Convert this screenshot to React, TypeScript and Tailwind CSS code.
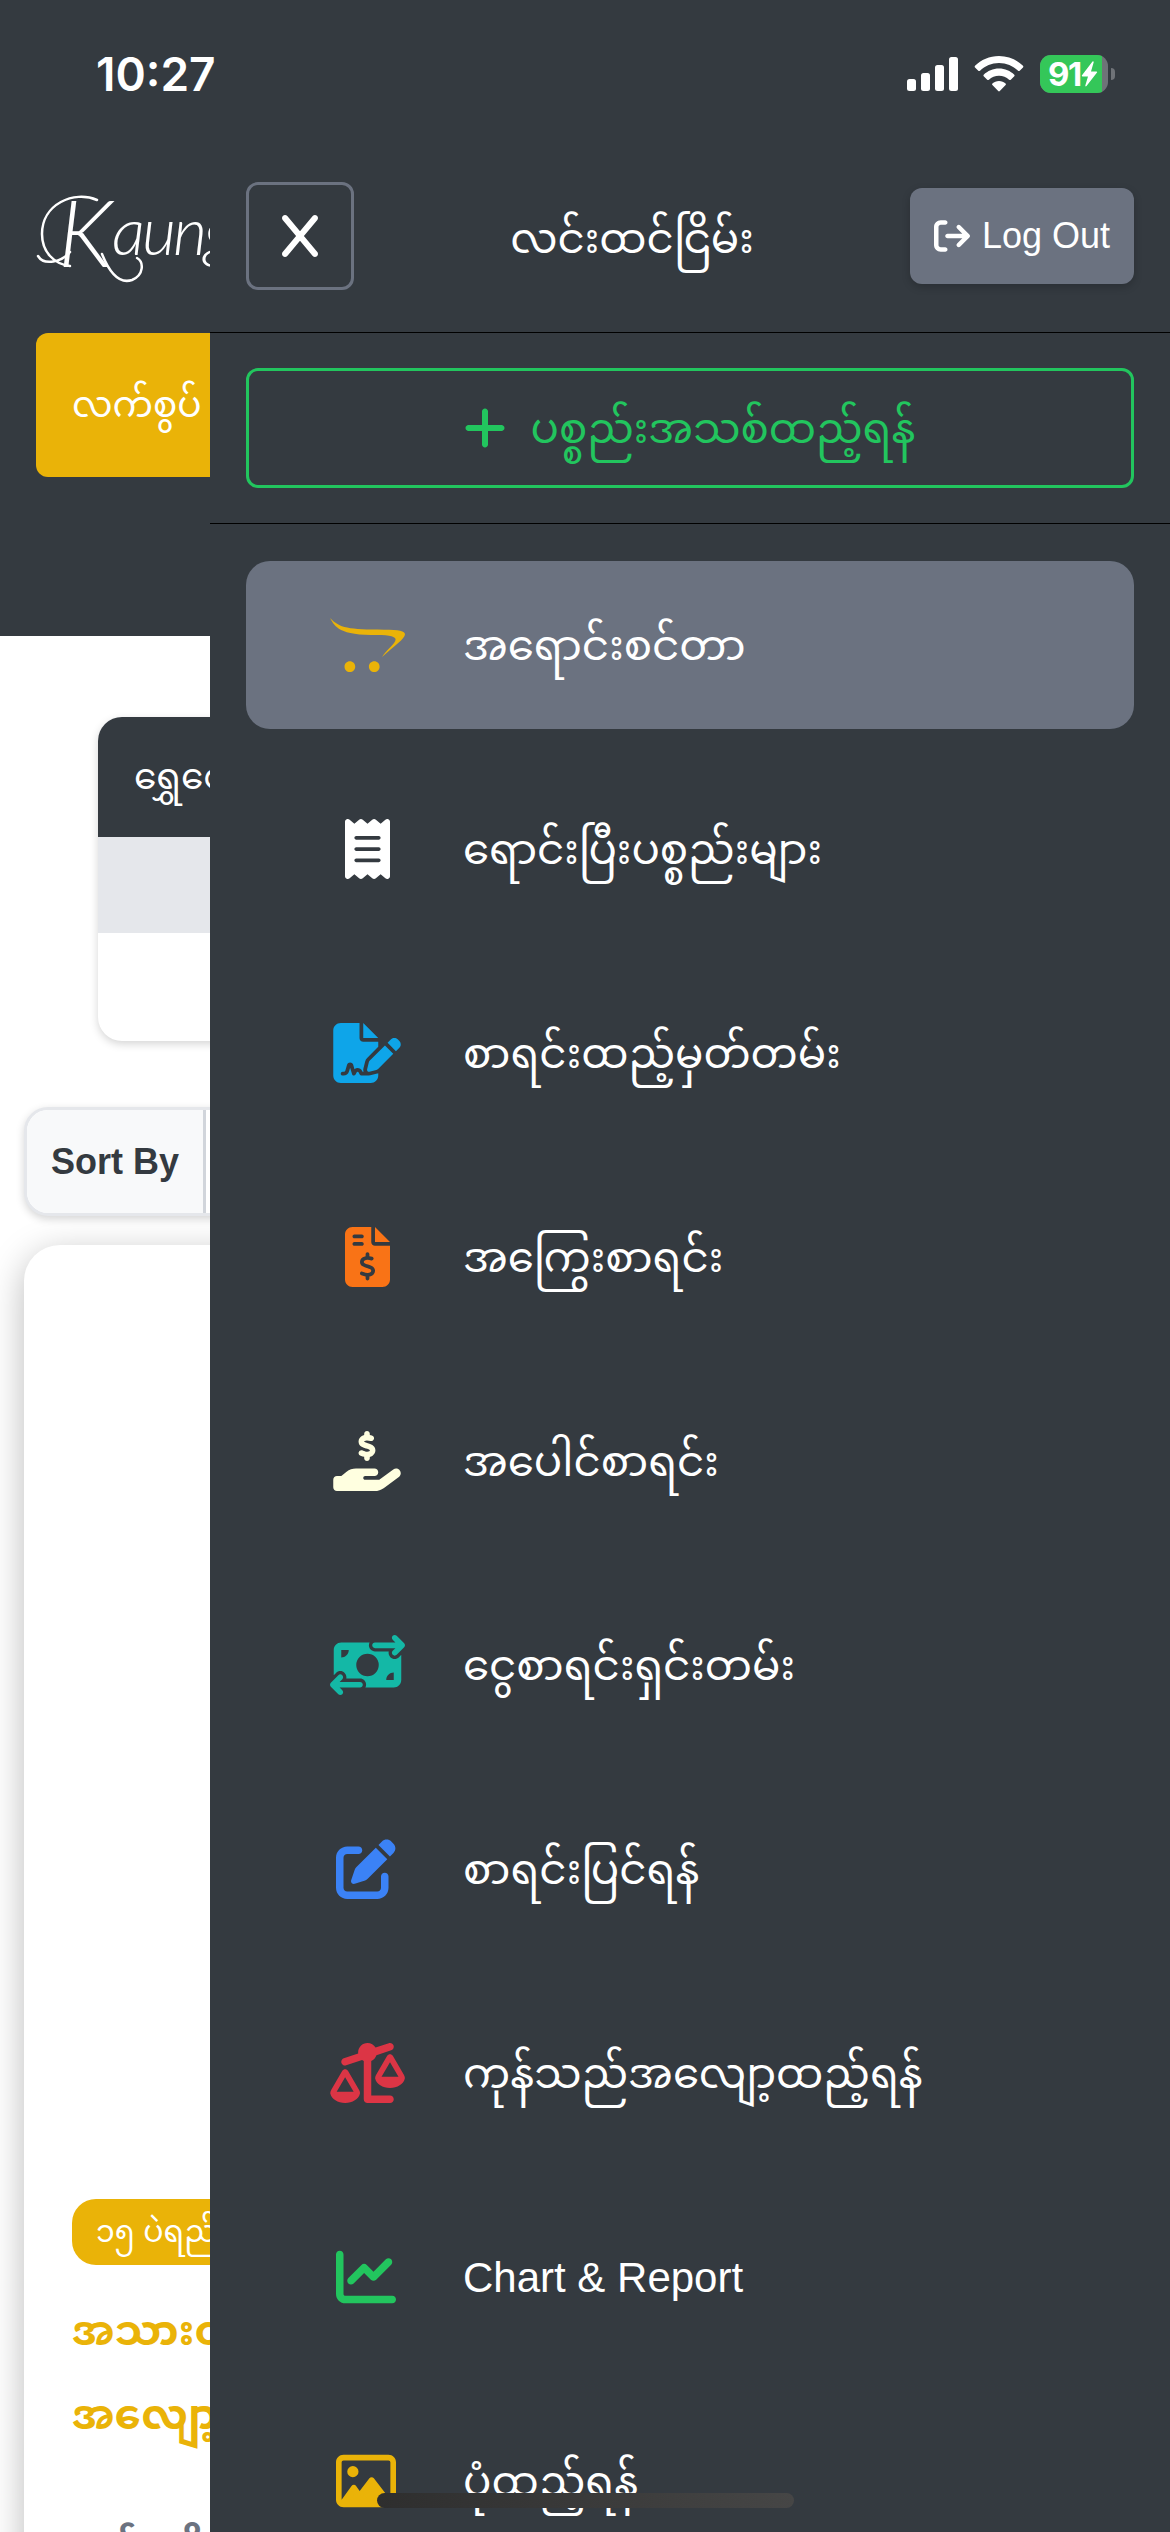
import type { ReactNode } from "react";
import {
  FaArrowRightFromBracket, FaChartLine, FaFileInvoiceDollar, FaFileSignature, FaHandHoldingDollar,
  FaMoneyBillTransfer, FaOpencart, FaPenToSquare, FaPlus, FaReceipt, FaRegImage, FaScaleUnbalanced, FaX,
} from "react-icons/fa6";

type Item = { icon: ReactNode; label: string; active?: boolean };

const items: Item[] = [
  { icon: <FaOpencart className="h-[60px] w-[75px] text-[#eab308]" />, label: "အရောင်းစင်တာ", active: true },
  { icon: <FaReceipt className="h-[60px] w-[45px] text-white" />, label: "ရောင်းပြီးပစ္စည်းများ" },
  { icon: <FaFileSignature className="-ml-px h-[60px] w-[68px] text-[#0ea5e9]" />, label: "စာရင်းထည့်မှတ်တမ်း" },
  { icon: <FaFileInvoiceDollar className="h-[60px] w-[45px] text-[#f97316]" />, label: "အကြွေးစာရင်း" },
  { icon: <FaHandHoldingDollar className="-ml-px h-[60px] w-[68px] text-[#ffffe0]" />, label: "အပေါင်စာရင်း" },
  { icon: <FaMoneyBillTransfer className="h-[60px] w-[75px] text-[#14b8a6]" />, label: "ငွေစာရင်းရှင်းတမ်း" },
  { icon: <FaPenToSquare className="-ml-[3px] h-[60px] w-[60px] text-[#3b82f6]" />, label: "စာရင်းပြင်ရန်" },
  { icon: <FaScaleUnbalanced className="h-[60px] w-[75px] text-[#dc3545]" />, label: "ကုန်သည်အလျော့ထည့်ရန်" },
  { icon: <FaChartLine className="-ml-[3px] h-[60px] w-[60px] text-[#22c55e]" />, label: "Chart & Report" },
  { icon: <FaRegImage className="-ml-[3px] h-[60px] w-[60px] text-[#eab308]" />, label: "ပုံထည့်ရန်" },
];

function StatusBar() {
  return (
    <div className="absolute left-0 top-0 z-20 flex h-[148px] w-full items-center justify-between pl-[96px] pr-[55px] text-white">
      <span className="font-['Inter'] text-[46px] font-semibold leading-none">10:27</span>
      <div className="flex items-center">
        <svg width="52" height="36" viewBox="0 0 52 36" fill="#fff">
          <rect x="0" y="23" width="9" height="12" rx="2.5" />
          <rect x="14" y="17" width="9" height="18" rx="2.5" />
          <rect x="28" y="9" width="9" height="26" rx="2.5" />
          <rect x="42" y="1" width="9" height="34" rx="2.5" />
        </svg>
        <svg className="ml-[15px]" width="50" height="36" viewBox="0 0 50 36" fill="#fff">
          <path d="M25 0C34.500 0 43 3.800 49 9.800Q49.700 10.600 49 11.400L45.700 14.700Q44.900 15.500 44 14.700C39 9.900 32.400 7 25 7S11 9.900 6 14.700Q5.100 15.500 4.300 14.700L1 11.400Q.3 10.600 1 9.800C7 3.800 15.500 0 25 0Z" />
          <path d="M25 12.500C31 12.500 36.400 14.900 40.300 18.700Q41 19.500 40.300 20.300L36.800 23.700Q36 24.500 35.100 23.700C32.400 21.200 28.900 19.700 25 19.700S17.600 21.200 14.900 23.700Q14 24.500 13.200 23.700L9.700 20.300Q9 19.500 9.700 18.700C13.600 14.900 19 12.500 25 12.500Z" />
          <path d="M25 25C27.600 25 29.800 25.900 31.600 27.400Q32.400 28.100 31.600 28.900L25.800 35Q25 35.800 24.200 35L18.400 28.900Q17.600 28.100 18.400 27.400C20.200 25.900 22.400 25 25 25Z" />
        </svg>
        <div className="ml-[16px] flex h-[38px] w-[68px] items-center overflow-hidden rounded-[11px] bg-[#6f7378]">
          <div className="flex h-full w-[62px] items-center bg-[#34c759] pl-[8px]">
            <span className="font-['Inter'] text-[33px] font-bold leading-none tracking-[-1.500px]">91</span>
            <svg width="17" height="26" viewBox="0 0 17 26" fill="#fff">
              <path d="M11.500.5 1 14.200Q.4 15.400 1.600 15.400H7L4.300 24.600Q4.300 26 5.500 25L16 11.600Q16.600 10.400 15.400 10.400H10L12.700 1.300Q12.600-.2 11.500.5Z" />
            </svg>
          </div>
        </div>
        <div className="ml-[3px] h-[12px] w-[4px] rounded-r-full bg-[#6f7378]" />
      </div>
    </div>
  );
}

function Logo() {
  return (
    <div className="relative flex h-[147px] items-start whitespace-nowrap pl-[22px] font-['Lato'] font-light italic leading-none">
      {/* flourishes around the wordmark */}
      <svg className="absolute left-0 top-0" width="120" height="110" viewBox="0 0 120 110" fill="none" stroke="#fff" strokeWidth="2.500" strokeLinecap="round">
        <path d="M61 14C38 4 6 18 6 48C6 66 18 78 34 80" />
        <path d="M2 70C8 80 26 76 34 66" />
        <path d="M66 68C74 88 84 98 96 94C108 89 108 76 101 72" />
      </svg>
      <span className="w-[54px] text-[92px]">K</span>
      <span className="mt-[11px] text-[66px] tracking-[-3px]">aung</span>
    </div>
  );
}

function ShopPage() {
  return (
    <div className="flex h-full w-[210px] shrink-0 flex-col overflow-hidden bg-white">
      <div className="flex h-[636px] shrink-0 flex-col bg-[#343a40] pl-9 pt-[186px] text-white">
        <Logo />
        <div className="flex h-36 w-[300px] shrink-0 items-center rounded-[12px] bg-[#eab308] pl-9 text-[36px]">လက်စွပ်</div>
      </div>
      <div className="ml-[98px] mt-[81px] flex h-[324px] w-[700px] shrink-0 flex-col overflow-hidden rounded-[24px] bg-white shadow-[0_3px_9px_rgba(0,0,0,0.17)]">
        <div className="flex h-[120px] items-center bg-[#343a40] pl-9 text-[36px] text-white">ရွှေစျေး</div>
        <div className="h-24 bg-[#e5e7eb]" />
      </div>
      <div className="ml-6 mt-[66px] flex h-[109px] w-[800px] shrink-0 overflow-hidden rounded-[24px] border-[3px] border-[#e5e7eb] bg-white shadow-[0_3px_9px_rgba(0,0,0,0.17)]">
        <div className="flex w-[179px] items-center border-r-[3px] border-[#d1d5db] bg-[#f8f9fa] pl-[24px] text-[36px] font-bold text-[#343a40]">
          Sort By
        </div>
      </div>
      <div className="ml-6 mt-[29px] flex w-[900px] grow flex-col rounded-t-[36px] bg-white pl-12 shadow-[0_9px_36px_rgba(0,0,0,0.27)]">
        <div className="mt-[954px] flex h-[66px] w-[240px] shrink-0 items-center rounded-[24px] bg-[#eab308] pb-px pl-6 text-[30px] text-white">၁၅ ပဲရည်</div>
        <div className="mt-[24px] h-[84px] shrink-0 text-[42px] font-bold leading-[84px] text-[#eab308]">အသားတင်</div>
        <div className="h-[84px] shrink-0 text-[42px] font-bold leading-[84px] text-[#eab308]">အလျော့တွက်</div>
        <div className="mt-[49px] flex h-[84px] shrink-0 text-[40px] font-bold leading-[84px] text-[#6b7280]">
          <span>တန်</span>
          <span className="ml-[40px]">ဖိုး</span>
        </div>
      </div>
    </div>
  );
}

export default function App() {
  return (
    <div className="relative flex h-[2532px] w-[1170px] overflow-hidden bg-white font-['Liberation_Sans','Noto_Sans_Myanmar','Noto_Sans',sans-serif]">
      <StatusBar />
      <ShopPage />
      <aside className="flex w-[960px] shrink-0 flex-col overflow-hidden bg-[#343a40] text-white">
        <div className="flex h-[333px] shrink-0 items-start justify-between border-b border-black px-9 pt-[182px]">
          <button className="flex h-[108px] w-[108px] items-center justify-center rounded-[12px] border-[3px] border-[#6b7280]">
            <FaX className="h-[48px] w-[36px]" />
          </button>
          <h1 className="flex h-[108px] items-center pt-[4px] text-[42px]">လင်းထင်ငြိမ်း</h1>
          <button className="mt-[6px] flex h-24 w-[224px] items-center rounded-[12px] bg-[#6b7280] pl-6 text-[36px] shadow-[0_3px_9px_rgba(0,0,0,0.2)]">
            <FaArrowRightFromBracket />
            <span className="ml-3">Log Out</span>
          </button>
        </div>
        <div className="flex h-[191px] shrink-0 items-center border-b border-black px-9">
          <button className="flex h-[120px] w-full items-center justify-center rounded-[12px] border-[3px] border-[#22c55e] text-[#22c55e]">
            <FaPlus className="h-[48px] w-[42px]" />
            <span className="ml-6 text-[42px]">ပစ္စည်းအသစ်ထည့်ရန်</span>
          </button>
        </div>
        <nav className="flex flex-col gap-9 px-9 pt-[37px]">
          {items.map((it) => (
            <a key={it.label} className={`flex h-[168px] shrink-0 items-center rounded-[24px] pl-[84px] ${it.active ? "bg-[#6b7280]" : ""}`}>
              <span className="flex w-[75px] shrink-0 justify-center">{it.icon}</span>
              <span className="ml-[58px] whitespace-nowrap text-[42px]">{it.label}</span>
            </a>
          ))}
        </nav>
      </aside>
      <div className="absolute left-[377px] top-[2493px] h-[15px] w-[417px] rounded-full bg-linear-to-r from-[#2e2e2e] via-[#3a3a3a] to-[#464646]" />
    </div>
  );
}
